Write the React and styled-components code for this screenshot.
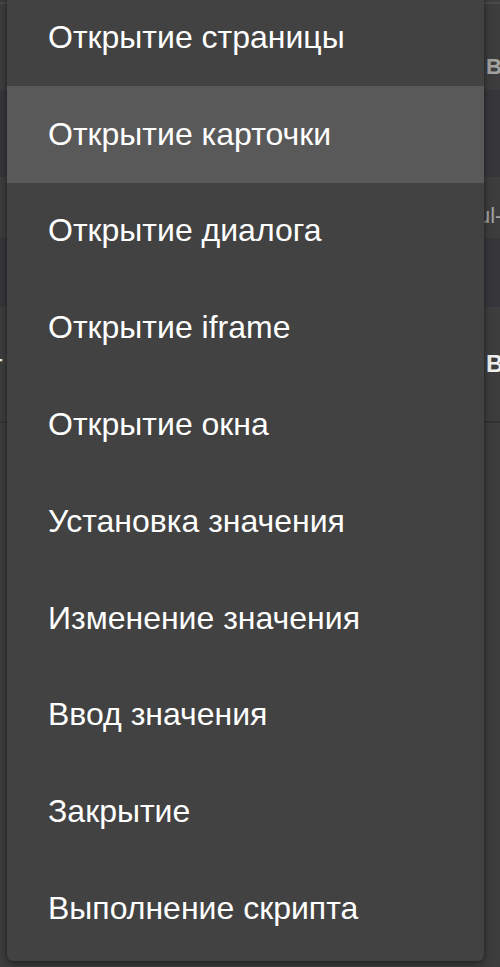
import React from 'react';
import styled, { createGlobalStyle } from 'styled-components';

const Global = createGlobalStyle`
  html, body {
    margin: 0;
    padding: 0;
    background: #3d3d3d;
    font-family: "Liberation Sans", Arial, sans-serif;
    overflow: hidden;
  }
`;

const Page = styled.div`
  position: relative;
  width: 500px;
  height: 967px;
  overflow: hidden;
  background: #3d3d3d;
`;

const Table = styled.div`
  display: flex;
  flex-direction: column;
  border-top: 2px solid #4a4a4a;
  margin-top: 2px;
`;

const Row = styled.div`
  display: grid;
  grid-template-columns: 486px 1fr;
  align-items: center;
  height: ${p => p.h}px;
  background: ${p => (p.dark ? '#37363b' : '#3d3d3d')};
  border-bottom: ${p => (p.line ? '2px solid #333' : 'none')};
  box-sizing: border-box;
  overflow: hidden;
`;

const Cell = styled.span`
  font-size: ${p => p.size || 22}px;
  font-weight: ${p => (p.bold ? 700 : 400)};
  color: ${p => (p.light ? '#f0f0f0' : '#a3a3a3')};
  white-space: nowrap;
  margin-top: ${p => p.shift || 0}px;
`;

const LeftCell = styled(Cell)`
  margin-left: -9px;
`;

const Menu = styled.ul`
  position: absolute;
  left: 7px;
  top: -15px;
  width: 477px;
  margin: 0;
  padding: 4px 0;
  list-style: none;
  background: #424242;
  border-radius: 6px;
  box-shadow: 0 4px 10px rgba(0, 0, 0, 0.35), 0 0 3px rgba(0, 0, 0, 0.3);
`;

const Item = styled.li`
  height: 96.8px;
  display: flex;
  align-items: center;
  padding-left: 41px;
  font-size: 32px;
  color: #ffffff;
  background: ${p => (p.active ? '#595959' : 'transparent')};
  white-space: nowrap;
`;

const items = [
  'Открытие страницы',
  'Открытие карточки',
  'Открытие диалога',
  'Открытие iframe',
  'Открытие окна',
  'Установка значения',
  'Изменение значения',
  'Ввод значения',
  'Закрытие',
  'Выполнение скрипта',
];

export default function App() {
  return (
    <Page>
      <Global />
      <Table>
        <Row h={86}>
          <span />
          <Cell bold shift={40}>В.</Cell>
        </Row>
        <Row h={87} dark />
        <Row h={61}>
          <span />
          <Cell shift={16} style={{ marginLeft: -8 }}>ul-</Cell>
        </Row>
        <Row h={69} dark />
        <Row h={116} line>
          <LeftCell light bold size={24}>т</LeftCell>
          <Cell light bold size={24}>В</Cell>
        </Row>
      </Table>
      <Menu>
        {items.map((t, i) => (
          <Item key={t} active={i === 1}>{t}</Item>
        ))}
      </Menu>
    </Page>
  );
}
